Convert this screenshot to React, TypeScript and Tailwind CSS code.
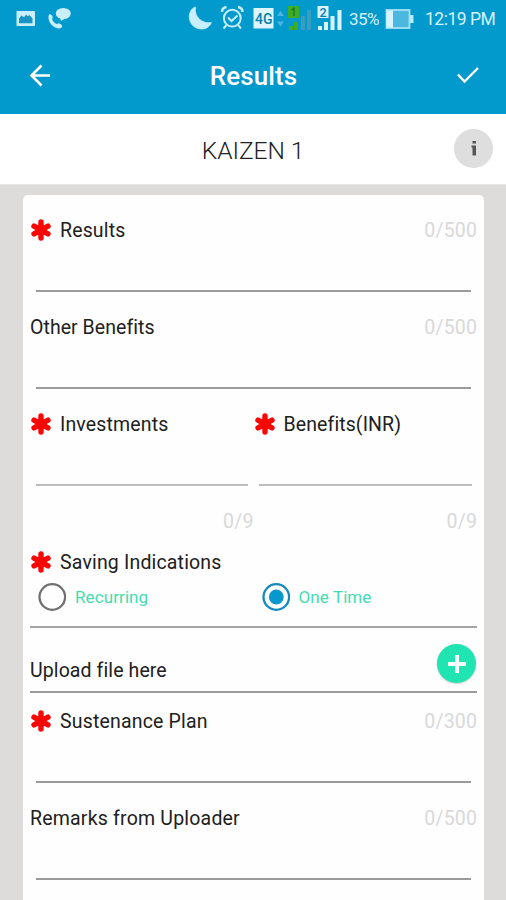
import React from "react";

function Asterisk() {
  return (
    <svg className="relative -top-[0.5px] ml-[1px] mr-[9px] h-[22px] w-5 shrink-0" viewBox="0 0 20 22">
      <g stroke="#fb0505" strokeWidth="5.4" strokeLinecap="round">
        <path d="M10 3V19M3 7.2L17 14.800M17 7.2L3 14.800" />
        <circle cx="10" cy="11" r="3" fill="#fb0505" />
      </g>
    </svg>
  );
}

interface LabelProps {
  text: string;
  required?: boolean;
  count?: string;
  spacing?: string;
}

function Label({ text, required, count, spacing = "tracking-[0.15px]" }: LabelProps) {
  return (
    <div className="flex h-7 items-center justify-between">
      <div className="flex items-center">
        {required && <Asterisk />}
        <span className={`whitespace-nowrap pt-[2px] text-[19.5px] leading-7 ${spacing}`}>{text}</span>
      </div>
      {count && <span className="pt-[1px] text-[19.5px] leading-7 tracking-[0.15px] text-[#d9d9d9]">{count}</span>}
    </div>
  );
}

function Field(props: LabelProps) {
  return (
    <div className="h-[97px] pt-[10px]">
      <Label {...props} />
      <div className="mx-[6px] mt-[46px] h-[2px] bg-[#9b9b9b]" />
    </div>
  );
}

function AmountField(props: LabelProps) {
  return (
    <div className="w-[224px] pt-[10px]">
      <Label {...props} />
      <div className="ml-[5.5px] mr-[5.5px] mt-[46px] h-[2px] bg-[#bdbdbd]" />
      <div className="mt-[21px] h-7 pt-[1px] text-right text-[19.5px] leading-7 tracking-[0.15px] text-[#d9d9d9]">0/9</div>
    </div>
  );
}

function Radio({ text, selected }: { text: string; selected?: boolean }) {
  return (
    <div className="flex w-[224px] items-center pl-2">
      <svg className="h-7 w-7" viewBox="0 0 28 28">
        <circle cx="14.300" cy="14" r="12.8" fill="none" stroke={selected ? "#1489bd" : "#707070"} strokeWidth="2.3" />
        {selected && <circle cx="14.300" cy="14" r="7.4" fill="#0799ce" />}
      </svg>
      <span className="ml-[9px] pt-[2px] text-[17px] tracking-[0.1px] text-[#44dcb0]">{text}</span>
    </div>
  );
}

function StatusBar() {
  return (
    <div className="flex h-[38px] items-center text-[#d5f2fd]">
      <svg className="h-[38px] w-[344px] shrink-0" viewBox="0 0 344 38">
        <g fill="#c8effb">
          <rect x="16.5" y="11" width="18.500" height="15" rx="0.800" />
          <path d="M19 23.200V18.500l2.500-3 2.500 1.800 2-2.500 2 1.500 1.500-1.300 3 3.500v4.700z" fill="#1b94c3" />
          <ellipse cx="63.3" cy="13.5" rx="7.5" ry="5.5" />
          <path d="M60 17l1 4 5-3z" />
          <path d="M49 14.500c1.500-1 3 .5 3.700 2.500.3 1-.8 1.600-.5 2.500.9 2.200 2.500 3.700 4.500 4.500 1 .3 1.700-.9 2.600-.6 1.600.5 3.200 2 2.900 3-1 2.400-4.200 2.500-7 1.200-4.500-2.200-8.200-8.500-6.200-13.100z" />
        </g>
        <path d="M195.500 7C186 10 187 28.500 201.500 29c5 0 8.500-2.700 9.800-6.500C203 24.500 193.500 17 195.500 7z" fill="#c9effc" stroke="#c9effc" strokeWidth="0.800" />
        <g fill="none" stroke="#c4eefb" strokeWidth="2">
          <circle cx="232.3" cy="18.2" r="8.4" />
          <path d="M228 17.500l3.500 3.500 6-5.500M226.500 25l-3 3.500M238 25l3 3.500" />
          <path d="M222 12c0-2.500 1.500-4.500 4.500-5M238 7c3 .5 4.500 2.500 4.500 5" strokeWidth="2.5" />
        </g>
        <rect x="253.5" y="8" width="20" height="20.5" fill="#ddf5fd" />
        <text x="255" y="24" fontSize="15" fontWeight="500" textLength="17.5" lengthAdjust="spacingAndGlyphs" fill="#087fab" fontFamily="Roboto">4G</text>
        <path d="M277 16l3.500-5 3.500 5zM277 21.500l3.500 5 3.500-5z" fill="#4bb6e2" />
        <path d="M288 6h11v12h-11zM289 26h4v4h-4zM294 22h4v8h-4z" fill="#3ead24" />
        <path d="M291.500 10l2.500-1.800V16" stroke="#167c31" strokeWidth="1.5" fill="none" />
        <path d="M301 16h4v14h-4zM307 10h4v20h-4z" fill="#389dbe" />
        <path d="M317.500 6h11v12h-11zM318 26h4v4h-4zM324 22h4v8h-4zM330.500 16h4v14h-4zM337.500 10h4v20h-4z" fill="#d8f4fc" />
        <text x="319.500" y="16.500" fontSize="12.5" fontWeight="500" fill="#087fab" fontFamily="Roboto">2</text>
      </svg>
      <span className="ml-[5px] w-[31px] whitespace-nowrap pt-[1px] text-[17px] tracking-[-0.6px]">35%</span>
      <svg className="ml-[5px] h-[20px] w-[29px]" viewBox="0 0 29 20">
        <rect x="1.5" y="1" width="23" height="18" fill="#4cb8e0" stroke="#a6e1f4" strokeWidth="1.8" />
        <rect x="1.5" y="1.5" width="6.5" height="17" fill="#d5f4fd" />
        <path d="M25 6h3.500v8H25z" fill="#b8e9f7" />
      </svg>
      <span className="ml-[11px] whitespace-nowrap pt-[1px] text-[17.5px] tracking-[-0.5px]">12:19 PM</span>
    </div>
  );
}

export default function App() {
  return (
    <div className="flex h-[900px] w-[506px] flex-col overflow-hidden bg-[#dedbdb] font-['Roboto',sans-serif] text-[#202020]">
      <header className="h-[114px] shrink-0 bg-[#0299cd]">
        <StatusBar />
        <div className="flex h-[76px] items-center justify-between pl-[29px] pr-[26px] text-white">
          <svg className="mb-[2px] h-[23px] w-[22px]" viewBox="0 0 22 23" fill="none" stroke="white" strokeWidth="2.6">
            <path d="M12.500 1.500L2.500 11.500l10 10M2.500 11.500H21" />
          </svg>
          <h1 className="pt-[1px] text-[26px] font-medium tracking-[0.1px]">Results</h1>
          <svg className="mb-[2px] h-[18px] w-[24px]" viewBox="0 0 24 18" fill="none" stroke="white" strokeWidth="2.4">
            <path d="M2 8.500l6.500 7L22 2" />
          </svg>
        </div>
      </header>
      <div className="grid h-[71px] shrink-0 grid-cols-[1fr_auto_1fr] items-center border-b border-[#e8e6e6] bg-white pr-[13px]">
        <h2 className="col-start-2 pl-[13px] pt-[4px] text-[24.5px] font-light tracking-[-0.05px] text-[#202020]">KAIZEN 1</h2>
        <div className="mb-[2px] flex h-[39px] w-[39px] items-center justify-center justify-self-end rounded-full bg-[#dedede]">
          <svg className="h-[15px] w-[6px]" viewBox="0 0 6 15" fill="#555555">
            <path d="M1.500 0H5v2.500H1.500zM0.500 4.500H5V14.500H1.500V6.500H0.500z" />
          </svg>
        </div>
      </div>
      <main className="ml-[23px] mt-[10px] h-[705px] w-[461px] rounded-t-[5px] bg-[#fefefe] pl-[7px] pr-[7px] pt-[11px]">
        <Field text="Results" required count="0/500" spacing="tracking-[0.15px]" />
        <Field text="Other Benefits" count="0/500" spacing="tracking-[0.05px]" />
        <div className="flex">
          <AmountField text="Investments" required spacing="tracking-[0.15px]" />
          <AmountField text="Benefits(INR)" required spacing="tracking-[0.1px]" />
        </div>
        <div className="mt-[13px]">
          <Label text="Saving Indications" required spacing="tracking-[0.17px]" />
        </div>
        <div className="mt-[7px] flex h-7">
          <Radio text="Recurring" />
          <Radio text="One Time" selected />
        </div>
        <div className="mt-[15px] h-[2px] bg-[#a5a5a5]" />
        <div className="flex h-[63px] justify-between">
          <span className="pt-[29px] text-[19.5px] leading-7 tracking-[0.1px]">Upload file here</span>
          <div className="mr-[1px] mt-4 flex h-[39px] w-[39px] items-center justify-center rounded-full bg-[#20e5b2] shadow-[0_1px_2px_#00000033]">
            <svg className="h-5 w-5" viewBox="0 0 20 20" stroke="white" strokeWidth="4">
              <path d="M1 10H19M10 1V19" />
            </svg>
          </div>
        </div>
        <div className="h-[2px] bg-[#9b9b9b]" />
        <div className="mt-[4px]">
          <Field text="Sustenance Plan" required count="0/300" spacing="tracking-[0.18px]" />
          <Field text="Remarks from Uploader" count="0/500" spacing="tracking-[0.2px]" />
        </div>
      </main>
    </div>
  );
}
